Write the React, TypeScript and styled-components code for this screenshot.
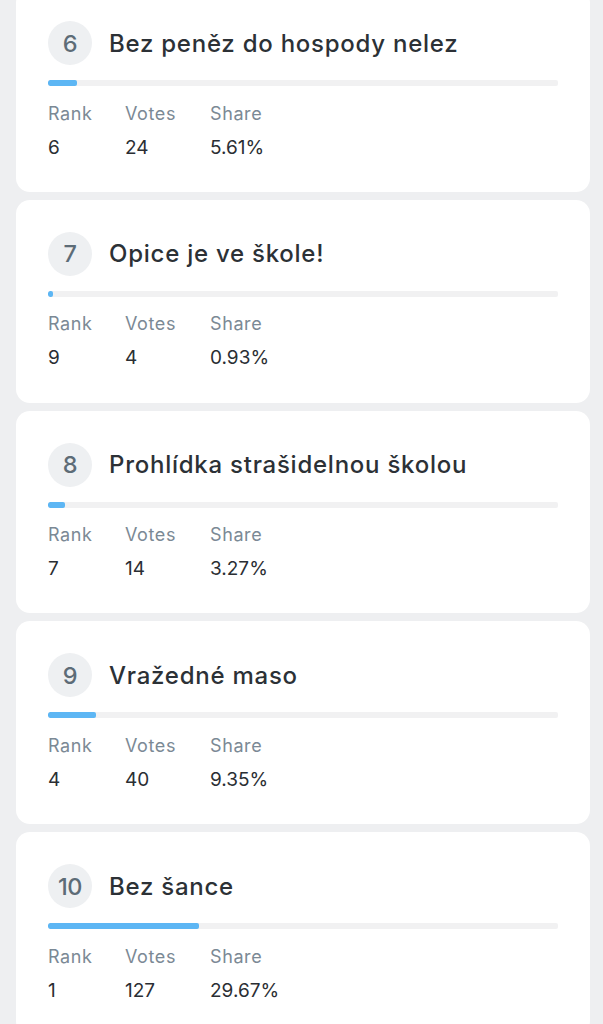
import React from 'react';
import styled, { createGlobalStyle } from 'styled-components';

const GlobalStyle = createGlobalStyle`
  html, body {
    margin: 0;
    padding: 0;
    background: #eeeff1;
    font-family: Inter, "Noto Sans", sans-serif;
    overflow: hidden;
  }
`;

interface Episode {
  no: number;
  title: string;
  rank: number;
  votes: number;
  share: number;
}

const episodes: Episode[] = [
  { no: 6, title: 'Bez peněz do hospody nelez', rank: 6, votes: 24, share: 5.61 },
  { no: 7, title: 'Opice je ve škole!', rank: 9, votes: 4, share: 0.93 },
  { no: 8, title: 'Prohlídka strašidelnou školou', rank: 7, votes: 14, share: 3.27 },
  { no: 9, title: 'Vražedné maso', rank: 4, votes: 40, share: 9.35 },
  { no: 10, title: 'Bez šance', rank: 1, votes: 127, share: 29.67 },
];

const List = styled.div`
  display: flex;
  flex-direction: column;
  gap: 8px;
  padding: 0 13px 0 16px;
  margin-top: -11px;
`;

const Card = styled.div`
  background: #fff;
  border-radius: 14px;
  padding: 32px 32px 32.3px 32px;
`;

const Header = styled.div`
  display: flex;
  align-items: center;
  gap: 17px;
`;

const Badge = styled.div`
  width: 44px;
  height: 44px;
  border-radius: 50%;
  background: #eef0f2;
  color: #5d6c77;
  display: flex;
  align-items: center;
  justify-content: center;
  font-size: 23.5px;
  font-weight: 500;
  letter-spacing: -0.5px;
  flex-shrink: 0;
`;

const Title = styled.div`
  font-size: 24px;
  font-weight: 500;
  color: #2c3136;
  letter-spacing: 0.75px;
`;

const Track = styled.div`
  margin-top: 15px;
  height: 6px;
  background: #f1f1f2;
  border-radius: 2px;
  overflow: hidden;
`;

const Fill = styled.div`
  height: 100%;
  background: #5db6f4;
  border-radius: 2px;
`;

const Stats = styled.div`
  display: grid;
  grid-template-columns: 77px 85px auto;
  margin-top: 15.5px;
  row-gap: 10px;
`;

const Label = styled.div`
  font-size: 18px;
  line-height: 24px;
  color: #7b8995;
  letter-spacing: 0.6px;
`;

const Value = styled.div`
  font-size: 19px;
  line-height: 24px;
  color: #2a2e33;
`;

const EpisodeCard: React.FC<{ e: Episode }> = ({ e }) => (
  <Card>
    <Header>
      <Badge>{e.no}</Badge>
      <Title>{e.title}</Title>
    </Header>
    <Track>
      <Fill style={{ width: `${e.share}%` }} />
    </Track>
    <Stats>
      <Label>Rank</Label>
      <Label>Votes</Label>
      <Label>Share</Label>
      <Value>{e.rank}</Value>
      <Value>{e.votes}</Value>
      <Value>{e.share.toFixed(2)}%</Value>
    </Stats>
  </Card>
);

export default function App() {
  return (
    <>
      <GlobalStyle />
      <List>
        {episodes.map(e => (
          <EpisodeCard key={e.no} e={e} />
        ))}
      </List>
    </>
  );
}
